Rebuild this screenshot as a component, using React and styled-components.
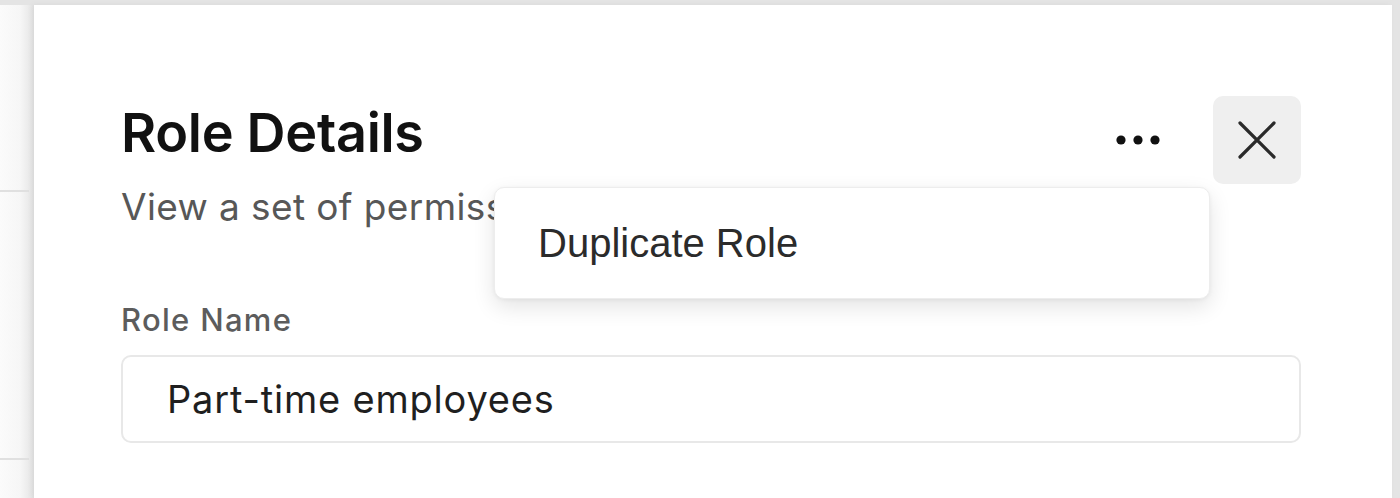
import React from "react";
import styled, { createGlobalStyle } from "styled-components";

const Global = createGlobalStyle`
  html, body { margin: 0; padding: 0; }
  body {
    font-family: Inter, "Noto Sans", "Liberation Sans", sans-serif;
    background: #e6e6e6;
    -webkit-font-smoothing: antialiased;
  }
  * { box-sizing: border-box; }
`;

const Page = styled.div`
  height: 498px;
  width: 1400px;
  overflow: hidden;
  background: #e4e4e4;
  padding: 5px 8px 0 0;
  display: flex;
`;

const Backdrop = styled.div`
  width: 34px;
  flex-shrink: 0;
  display: flex;
  flex-direction: column;
  background: linear-gradient(90deg, #fbfbfb 0%, #f6f6f6 60%, #e9e9e9 88%, #e2e2e2 100%);
`;

const BackdropRow = styled.div`
  height: ${(p) => p.h}px;
  flex-shrink: 0;
  border-bottom: 2px solid #e0e0e0;
  margin-right: 5px;
`;

const Drawer = styled.div`
  flex: 1;
  background: #ffffff;
  padding: 95px 91px 0 87px;
  display: flex;
  flex-direction: column;
  box-shadow: -2px 0 6px rgba(0, 0, 0, 0.05);
`;

const Header = styled.div`
  display: flex;
  align-items: flex-start;
  justify-content: space-between;
`;

const TitleBlock = styled.div`
  flex: 1;
  min-width: 0;
`;

const Title = styled.h1`
  margin: 0;
  font-size: 54px;
  line-height: 65px;
  font-weight: 600;
  letter-spacing: -0.3px;
  color: #111111;
`;

const Subtitle = styled.p`
  margin: 17px 0 0;
  font-size: 37px;
  line-height: 50px;
  font-weight: 400;
  letter-spacing: 0.4px;
  color: #575757;
  white-space: nowrap;
`;

const Actions = styled.div`
  position: relative;
  margin-top: -4px;
  display: flex;
  align-items: center;
  gap: 31px;
`;

const IconButton = styled.button`
  width: 88px;
  height: 88px;
  border: none;
  border-radius: 10px;
  padding: 0;
  display: flex;
  align-items: center;
  justify-content: center;
  background: ${(p) => (p.$filled ? "#efefef" : "transparent")};
  color: #1a1a1a;
  cursor: pointer;
`;

const Menu = styled.div`
  position: absolute;
  top: calc(100% + 3px);
  right: 91px;
  width: 716px;
  padding: 32px 43px;
  background: #ffffff;
  border: 1px solid #ededed;
  border-radius: 10px;
  box-shadow: 0 8px 22px rgba(0, 0, 0, 0.11), 0 1px 4px rgba(0, 0, 0, 0.05);
  z-index: 10;
`;

const MenuItem = styled.div`
  font-family: "Liberation Sans", Arial, sans-serif;
  font-size: 40px;
  line-height: 46px;
  color: #2b2b2b;
`;

const Field = styled.div`
  margin-top: 68px;
  display: flex;
  flex-direction: column;
  gap: 15px;
`;

const Label = styled.label`
  font-size: 31px;
  line-height: 40px;
  font-weight: 500;
  color: #5c5c5c;
  letter-spacing: 1.3px;
`;

const Input = styled.div`
  height: 88px;
  border: 2px solid #e8e8e8;
  border-radius: 10px;
  padding: 0 44px;
  display: flex;
  align-items: center;
  font-size: 38px;
  letter-spacing: 0.8px;
  color: #1f1f1f;
`;

const Dots = () => (
  <svg width="46" height="10" viewBox="0 0 46 10" aria-hidden="true">
    <circle cx="6" cy="5" r="4.6" fill="#111" />
    <circle cx="23" cy="5" r="4.6" fill="#111" />
    <circle cx="40" cy="5" r="4.6" fill="#111" />
  </svg>
);

const CloseIcon = () => (
  <svg width="38" height="38" viewBox="0 0 38 38" aria-hidden="true">
    <path d="M2 2 L36 36 M36 2 L2 36" stroke="#2a2a2a" strokeWidth="3.2" strokeLinecap="round" />
  </svg>
);

export default function App() {
  return (
    <>
      <Global />
      <Page>
        <Backdrop>
          <BackdropRow h={187} />
          <BackdropRow h={268} />
        </Backdrop>
        <Drawer>
          <Header>
            <TitleBlock>
              <Title>Role Details</Title>
              <Subtitle>View a set of permissions assigned to this role.</Subtitle>
            </TitleBlock>
            <Actions>
              <IconButton aria-label="More options">
                <Dots />
              </IconButton>
              <IconButton $filled aria-label="Close">
                <CloseIcon />
              </IconButton>
              <Menu>
                <MenuItem>Duplicate Role</MenuItem>
              </Menu>
            </Actions>
          </Header>
          <Field>
            <Label>Role Name</Label>
            <Input>Part-time employees</Input>
          </Field>
        </Drawer>
      </Page>
    </>
  );
}
